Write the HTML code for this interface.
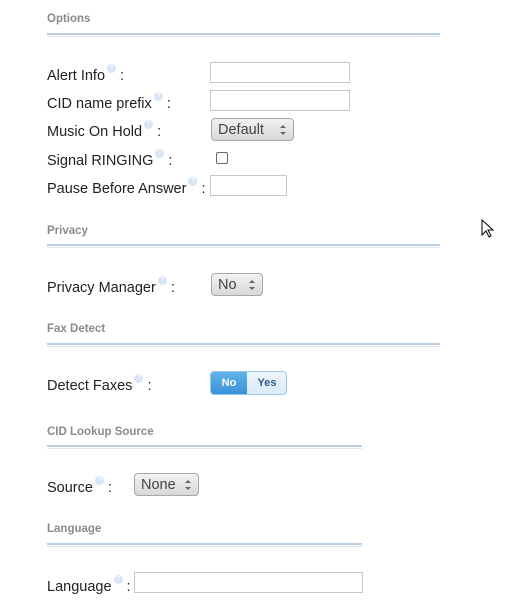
<!DOCTYPE html>
<html><head><meta charset="utf-8"><style>
body{margin:0;width:508px;height:600px;background:#fff;position:relative;overflow:hidden;font-family:"Liberation Sans",sans-serif;}
.h{position:absolute;left:47px;font-size:11.5px;font-weight:bold;color:#8a8a8a;}
.ln{position:absolute;left:47px;height:1px;border-top:2px solid #b9cde4;border-bottom:1px solid #dfe8f2;}
.l{position:absolute;left:47px;font-size:14.5px;color:#222;line-height:18px;}
.q{display:inline-block;width:9px;height:9px;border-radius:50%;background:#d6e5f5;vertical-align:top;margin-top:-3px;margin-left:2px;margin-right:0;font-size:7px;color:#fff;text-align:center;line-height:9px;}
.in{position:absolute;border:1px solid #c8c8c8;background:#fff;box-sizing:border-box;}
.sel{position:absolute;border:1px solid #a8a8a8;border-radius:4px;background:linear-gradient(#f2f2f2,#d8d8d8);box-sizing:border-box;font-size:14.5px;color:#444;padding-left:6px;line-height:22px;}
.sel:after{content:"";position:absolute;right:7px;top:6px;border-left:3px solid transparent;border-right:3px solid transparent;border-bottom:3px solid #666;}
.sel:before{content:"";position:absolute;right:7px;top:13px;border-left:3px solid transparent;border-right:3px solid transparent;border-top:3px solid #666;}
</style></head><body>
<div class="h" style="top:13px">Options</div>
<div class="ln" style="top:33px;width:393px"></div>
<div class="l" style="top:67px">Alert Info<span class="q">?</span> :</div>
<div class="in" style="left:210px;top:62px;width:140px;height:21px"></div>
<div class="l" style="top:95px">CID name prefix<span class="q">?</span> :</div>
<div class="in" style="left:210px;top:90px;width:140px;height:21px"></div>
<div class="l" style="top:123px">Music On Hold<span class="q">?</span> :</div>
<div class="sel" style="left:211px;top:118px;width:83px;height:23px">Default</div>
<div class="l" style="top:152px">Signal RINGING<span class="q">?</span> :</div>
<div style="position:absolute;left:216px;top:152px;width:10px;height:10px;border:1px solid #666;border-radius:2px;background:#fff"></div>
<div class="l" style="top:180px">Pause Before Answer<span class="q">?</span> :</div>
<div class="in" style="left:210px;top:175px;width:77px;height:21px"></div>

<div class="h" style="top:225px">Privacy</div>
<div class="ln" style="top:244px;width:393px"></div>
<div class="l" style="top:279px">Privacy Manager<span class="q">?</span> :</div>
<div class="sel" style="left:211px;top:273px;width:52px;height:23px">No</div>

<div class="h" style="top:323px">Fax Detect</div>
<div class="ln" style="top:343px;width:393px"></div>
<div class="l" style="top:377px">Detect Faxes<span class="q">?</span> :</div>
<div style="position:absolute;left:210px;top:371px;width:77px;height:24px;border:1px solid #9cc6ea;border-radius:4px;box-sizing:border-box;background:linear-gradient(#eef6fd,#d9ebf9);overflow:hidden;font-size:11px;font-weight:bold;line-height:22px">
<div style="position:absolute;left:0;top:0;width:36px;height:22px;background:linear-gradient(#5fb3ec,#3a93d8);color:#fff;text-align:center">No</div>
<div style="position:absolute;left:36px;top:0;width:40px;height:22px;color:#2d5f8e;text-align:center">Yes</div></div>

<div class="h" style="top:426px">CID Lookup Source</div>
<div class="ln" style="top:445px;width:315px"></div>
<div class="l" style="top:479px">Source<span class="q">?</span> :</div>
<div class="sel" style="left:134px;top:473px;width:65px;height:23px">None</div>

<div class="h" style="top:523px">Language</div>
<div class="ln" style="top:543px;width:315px"></div>
<div class="l" style="top:578px">Language<span class="q">?</span> :</div>
<div class="in" style="left:134px;top:572px;width:229px;height:21px"></div>

<svg style="position:absolute;left:481px;top:219px" width="14" height="20" viewBox="0 0 14 20"><path d="M1 1 L1 16 L5 12 L8 18 L10 17 L7 11 L12 11 Z" fill="#fff" stroke="#000" stroke-width="1"/></svg>
</body></html>
